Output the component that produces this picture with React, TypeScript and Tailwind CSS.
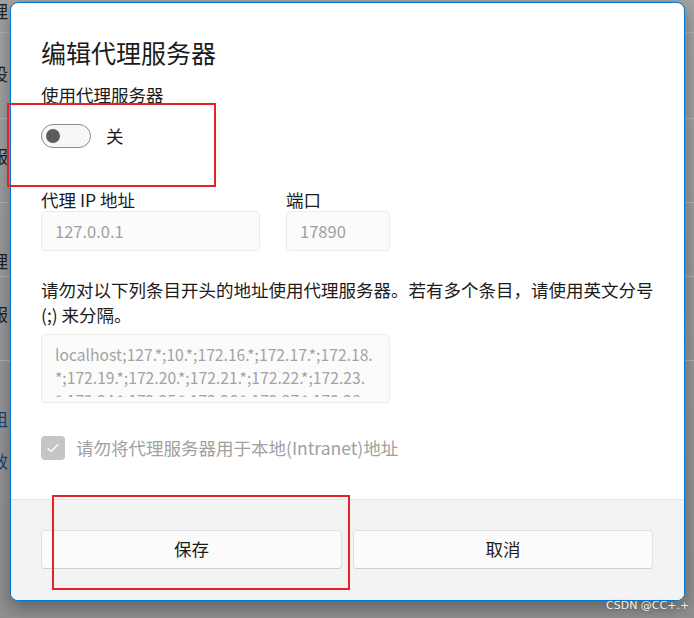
import React from 'react';

const CheckIcon = () => (
    <svg viewBox="0 0 16 16" className="h-[16px] w-[16px]" fill="none" stroke="white" strokeWidth={1.3} strokeLinecap="round" strokeLinejoin="round">
        <path d="M3 8.5l3.2 3L13 4.5" />
    </svg>
);

const bgRows = [
    { h: 'h-[33px]', ch: '理', pt: 'pt-0' },
    { h: 'h-[86px]', ch: '设', pt: 'pt-[30px]' },
    { h: 'h-[84px]', ch: '服', pt: 'pt-[26px]' },
    { h: 'h-[74px]', ch: '理', pt: 'pt-[47px]' },
    { h: 'h-[84px]', ch: '服', pt: 'pt-[26px]' },
];

export default function App() {
    return (
        <div className="relative w-[694px] h-[618px] overflow-hidden bg-gradient-to-b from-[#a3a3a3] to-[#8f8f8f] font-['Noto_Sans_CJK_SC','Noto_Sans',sans-serif]">
            {/* settings page behind the dialog */}
            <div className="flex flex-col">
                {bgRows.map((r, i) => (
                    <div key={i} className={`${r.h} border-b border-[#b3b3b3] ${r.pt}`}>
                        <span className="block -ml-[9px] text-[17px] leading-[22px] text-[#1f1f1f]">{r.ch}</span>
                    </div>
                ))}
                <div className="pt-[47px] flex flex-col gap-[20px]">
                    <span className="block -ml-[9px] text-[17px] leading-[22px] text-[#1d3f78]">组</span>
                    <span className="block -ml-[9px] text-[17px] leading-[22px] text-[#1d3f78]">效</span>
                </div>
            </div>

            {/* dialog */}
            <div className="absolute left-[10px] top-[2px] w-[675px] h-[599px] flex flex-col rounded-[8px] border border-[#0078d4] bg-white overflow-hidden shadow-[0_6px_18px_rgba(0,0,0,0.35)]">
                <div className="flex-1 flex flex-col px-[30px] pt-[33px] text-[#1b1b1b]">
                    <h1 className="text-[25px] leading-[32px] font-normal">编辑代理服务器</h1>
                    <p className="mt-[15px] text-[17.5px] leading-[24px]">使用代理服务器</p>
                    <div className="mt-[17px] flex items-center gap-[15px]">
                        <div className="w-[50px] h-[24px] rounded-full border border-[#8a8a8a] bg-[#f7f7f7] flex items-center pl-[4px]">
                            <div className="w-[14px] h-[14px] rounded-full bg-[#5c5c5c]" />
                        </div>
                        <span className="text-[17.5px] leading-[24px]">关</span>
                    </div>

                    <div className="mt-[41px] flex gap-[26px]">
                        <div className="flex flex-col">
                            <label className="text-[17.5px] leading-[22px]">代理 IP 地址</label>
                            <div className="w-[219px] h-[40px] rounded-[4px] border border-[#ececec] bg-[#fbfbfb] flex items-center px-[13px] text-[16.5px] text-[#a0a0a0]">127.0.0.1</div>
                        </div>
                        <div className="flex flex-col">
                            <label className="text-[17.5px] leading-[22px]">端口</label>
                            <div className="w-[104px] h-[40px] rounded-[4px] border border-[#ececec] bg-[#fbfbfb] flex items-center px-[13px] text-[16.5px] text-[#a0a0a0]">17890</div>
                        </div>
                    </div>

                    <p className="mt-[26px] text-[17.5px] leading-[25px] whitespace-nowrap">
                        请勿对以下列条目开头的地址使用代理服务器。若有多个条目，请使用英文分号<br />(;) 来分隔。
                    </p>

                    <div className="mt-[7px] w-[349px] h-[69px] rounded-[4px] border border-[#ececec] bg-[#fbfbfb] pl-[13px] pt-[8px]">
                        <div className="h-[54px] overflow-hidden text-[15.7px] leading-[23px] text-[#a3a3a3] whitespace-nowrap">
                            <div>localhost;127.*;10.*;172.16.*;172.17.*;172.18.</div>
                            <div>*;172.19.*;172.20.*;172.21.*;172.22.*;172.23.</div>
                            <div>*;172.24.*;172.25.*;172.26.*;172.27.*;172.28.</div>
                        </div>
                    </div>

                    <div className="mt-[33px] flex items-center gap-[11px]">
                        <div className="w-[24px] h-[24px] rounded-[4px] bg-[#c5c5c5] flex items-center justify-center">
                            <CheckIcon />
                        </div>
                        <span className="text-[17.5px] leading-[24px] text-[#a0a0a0]">请勿将代理服务器用于本地(Intranet)地址</span>
                    </div>
                </div>

                <div className="h-[101px] shrink-0 border-t border-[#e3e3e3] bg-[#f3f3f3] flex gap-[11px] px-[30px] pt-[30px]">
                    <button className="w-[301px] h-[39px] rounded-[4px] border border-[#e2e2e2] border-b-[#cdcdcd] bg-[#fbfbfb] text-[17.5px] text-[#1b1b1b]">保存</button>
                    <button className="w-[300px] h-[39px] rounded-[4px] border border-[#e2e2e2] border-b-[#cdcdcd] bg-[#fbfbfb] text-[17.5px] text-[#1b1b1b]">取消</button>
                </div>
            </div>

            {/* red annotation boxes */}
            <div className="absolute left-[7px] top-[103px] w-[209px] h-[84px] border-2 border-[#e5222a]" />
            <div className="absolute left-[52px] top-[495px] w-[298px] h-[95px] border-2 border-[#e5222a]" />

            {/* watermark */}
            <span className="absolute left-[606px] top-[599px] text-[11px] leading-[14px] text-[#f2f2f2] [text-shadow:0_0_2px_#555] font-['DejaVu_Sans',sans-serif]">CSDN @CC+.+</span>
        </div>
    );
}
